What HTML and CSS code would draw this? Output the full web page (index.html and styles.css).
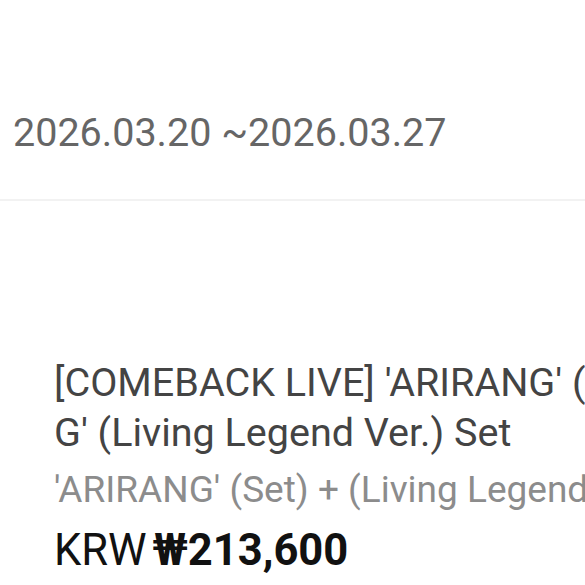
FILE: index.html
```html
<!DOCTYPE html>
<html lang="en">

<head>
    <title>Comeback Live</title>
    <meta charset="UTF-8">
    <meta name="viewport" content="width=device-width, initial-scale=1.0">
    <link rel="stylesheet" href="styles.css">
</head>

<body>
    <div class="page">
        <div class="period">
            <div class="period-text">2026.03.20 ~2026.03.27</div>
        </div>

        <div class="item">
            <div class="item-title">
                <div class="line">[COMEBACK LIVE] 'ARIRANG' (Living Legend Ver.) 'ARIRAN</div>
                <div class="line">G' (Living Legend Ver.) Set</div>
            </div>
            <div class="item-option">'ARIRANG' (Set) + (Living Legend Ver.)</div>
            <div class="item-price">KRW <b>₩213,600</b></div>
        </div>
    </div>
</body>

</html>
```

FILE: styles.css
```css
* {
    margin: 0;
    padding: 0;
    box-sizing: border-box;
}

body {
    background-color: #fff;
    font-family: Roboto, "Noto Sans", sans-serif;
    overflow: hidden;
}

.page {
    width: 585px;
    height: 585px;
    overflow: hidden;
}

.period {
    height: 201px;
    padding: 108px 0 0 13px;
    border-bottom: 2px solid #f2f2f2;
}

.period-text {
    font-size: 39.5px;
    line-height: 50px;
    color: #666;
    white-space: nowrap;
}

.item {
    padding: 157px 0 0 54px;
}

.item-title {
    font-size: 39.5px;
    line-height: 50px;
    color: #444;
}

.line,
.item-option,
.item-price {
    white-space: nowrap;
    overflow: hidden;
}

.item-option {
    margin-top: 7px;
    font-size: 37px;
    line-height: 50px;
    color: #8c8c8c;
}

.item-price {
    margin-top: 11px;
    font-size: 43.5px;
    line-height: 50px;
    color: #111;
}

.item-price b {
    font-weight: 700;
    margin-left: -5px;
}
```
